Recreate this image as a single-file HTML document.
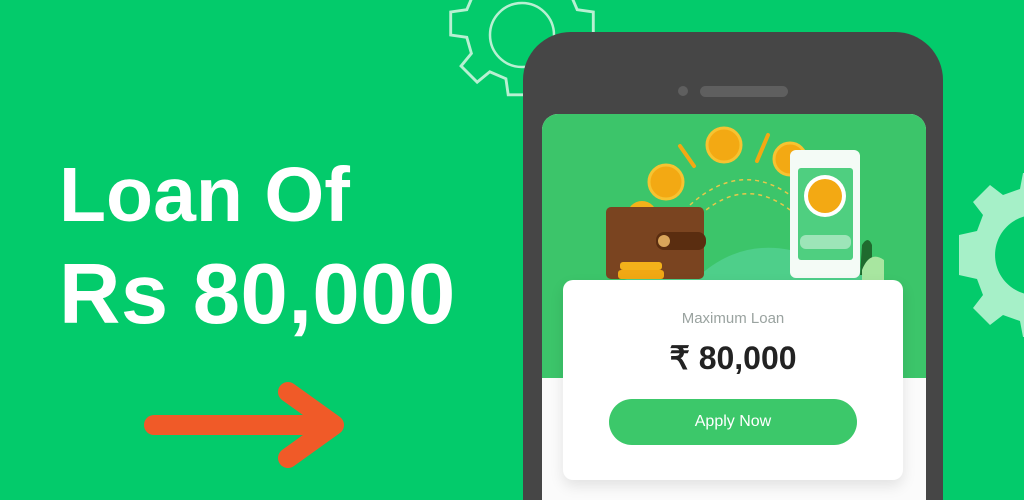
<!DOCTYPE html>
<html><head><style>
html,body{margin:0;padding:0;}
body{width:1024px;height:500px;overflow:hidden;background:#03cb6b;position:relative;font-family:"Liberation Sans",sans-serif;}
.t{position:absolute;left:59px;color:#fff;font-weight:bold;line-height:1;white-space:nowrap;}
</style></head><body>
<svg width="1024" height="500" style="position:absolute;left:0;top:0">
  <g transform="translate(522,35)" fill="none" stroke="#b8f0d2" stroke-width="2.5">
    <circle r="32"/>
    <path d="M-10,-72 L10,-72 L12,-58 L26,-52 L37,-61 L51,-47 L42,-36 L48,-22 L62,-20 L62,0 L48,2 L44,16 L53,27 L39,41 L28,32 L14,38 L12,52 L-12,52 L-14,38 L-28,32 L-39,41 L-53,27 L-44,16 L-48,2 L-62,0 L-62,-20 L-48,-22 L-42,-36 L-51,-47 L-37,-61 L-26,-52 L-12,-58 Z" transform="scale(1.15)"/>
  </g>
  <g transform="translate(1035,255)">
    <path fill="#a6f0c8" fill-rule="evenodd" d="M-12,-82 L12,-82 L15,-66 L32,-60 L45,-70 L62,-53 L52,-40 L58,-24 L76,-20 L76,20 L58,24 L52,40 L62,53 L45,70 L32,60 L15,66 L12,82 L-12,82 L-15,66 L-32,60 L-45,70 L-62,53 L-52,40 L-58,24 L-76,20 L-76,-20 L-58,-24 L-52,-40 L-62,-53 L-45,-70 L-32,-60 L-15,-66 Z M0,-40 A40,40 0 1,0 0.1,-40 Z"/>
  </g>
  <g stroke="#f05a28" stroke-width="20" stroke-linecap="round" stroke-linejoin="round" fill="none">
    <line x1="154" y1="425" x2="330" y2="425"/>
    <polyline points="288,392 334,425 288,458"/>
  </g>
  <rect x="523" y="32" width="420" height="468" rx="48" fill="#464646"/>
  <rect x="523" y="450" width="420" height="50" fill="#464646"/>
  <circle cx="683" cy="91" r="5" fill="#5f5f5f"/>
  <rect x="700" y="86" width="88" height="11" rx="5.5" fill="#5f5f5f"/>
  <path d="M542,130 a16,16 0 0 1 16,-16 h352 a16,16 0 0 1 16,16 V500 H542 Z" fill="#fbfbfb"/>
  <path d="M542,130 a16,16 0 0 1 16,-16 h352 a16,16 0 0 1 16,16 V378 H542 Z" fill="#3cc56a"/>
  <path d="M600,290 Q650,265 700,275 Q740,240 790,250 Q830,245 880,280 L880,290 Z" fill="#4ecf8a"/>
  <path d="M690,205 Q740,160 790,195" stroke="#e6c84a" stroke-width="1.5" stroke-dasharray="4 4" fill="none"/>
  <path d="M700,215 Q745,175 790,210" stroke="#e6c84a" stroke-width="1.5" stroke-dasharray="4 4" fill="none"/>
  <circle cx="642" cy="216" r="15" fill="#f3b21a"/>
  <rect x="606" y="207" width="98" height="72" rx="5" fill="#7a4420"/>
  <rect x="656" y="232" width="50" height="18" rx="8" fill="#5a2d10"/>
  <circle cx="664" cy="241" r="6" fill="#d9a55a"/>
  <rect x="620" y="262" width="42" height="8" rx="3" fill="#f3b21a"/>
  <rect x="618" y="270" width="46" height="9" rx="3" fill="#f0a814"/>
  <circle cx="666" cy="182" r="17" fill="#f3a913" stroke="#f7c331" stroke-width="3"/>
  <circle cx="724" cy="145" r="17" fill="#f3a913" stroke="#f7c331" stroke-width="3"/>
  <circle cx="790" cy="159" r="16" fill="#f3a913" stroke="#f7c331" stroke-width="3"/>
  <line x1="680" y1="146" x2="694" y2="166" stroke="#f3a913" stroke-width="4" stroke-linecap="round"/>
  <line x1="768" y1="135" x2="757" y2="161" stroke="#f3a913" stroke-width="4" stroke-linecap="round"/>
  <rect x="790" y="150" width="70" height="128" rx="6" fill="#f4fbf6"/>
  <rect x="798" y="168" width="55" height="92" rx="3" fill="#4fcf80"/>
  <circle cx="825" cy="196" r="21" fill="#fff"/>
  <circle cx="825" cy="196" r="17" fill="#f3a913"/>
  <rect x="800" y="235" width="51" height="14" rx="6" fill="#9de5b8"/>
  <path d="M862,245 q6,-10 10,0 v30 h-12 Z" fill="#1f6b2e"/>
  <path d="M862,270 q8,-20 22,-10 v20 h-22 Z" fill="#a8e6a0"/>
</svg>
<div class="t" style="top:157px;font-size:77px">Loan Of</div>
<div class="t" style="top:252px;font-size:85px;letter-spacing:0.5px">Rs 80,000</div>
<div style="position:absolute;left:563px;top:280px;width:340px;height:200px;background:#fff;border-radius:10px;box-shadow:0 6px 14px rgba(0,0,0,0.1);text-align:center;">
  <div style="margin-top:30px;font-size:15px;color:#9aa3a0;">Maximum Loan</div>
  <div style="margin-top:12px;font-size:32px;font-weight:bold;color:#222;">₹ 80,000</div>
  <div style="position:absolute;left:46px;top:119px;width:248px;height:46px;border-radius:23px;background:#3cc86a;color:#fff;font-size:16px;line-height:46px;">Apply Now</div>
</div>
</body></html>
